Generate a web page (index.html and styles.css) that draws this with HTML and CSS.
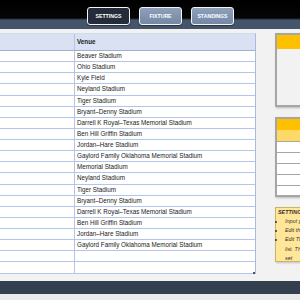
FILE: index.html
```html
<!DOCTYPE html>
<html lang="en">
<head>
  <meta charset="UTF-8">
  <title>Fixture</title>
  <link rel="stylesheet" href="styles.css">
</head>
<body>
  <div class="topbar">
    <div class="nav">
      <button class="nav-btn active">SETTINGS</button>
      <button class="nav-btn">FIXTURE</button>
      <button class="nav-btn">STANDINGS</button>
    </div>
  </div>

  <div class="main">
    <div class="sheet">
      <div class="row head">
        <div class="cell first"></div>
        <div class="cell">Venue</div>
      </div>
      <div class="row"><div class="cell first"></div><div class="cell">Beaver Stadium</div></div>
      <div class="row"><div class="cell first"></div><div class="cell">Ohio Stadium</div></div>
      <div class="row"><div class="cell first"></div><div class="cell">Kyle Field</div></div>
      <div class="row"><div class="cell first"></div><div class="cell">Neyland Stadium</div></div>
      <div class="row"><div class="cell first"></div><div class="cell">Tiger Stadium</div></div>
      <div class="row"><div class="cell first"></div><div class="cell">Bryant–Denny Stadium</div></div>
      <div class="row"><div class="cell first"></div><div class="cell">Darrell K Royal–Texas Memorial Stadium</div></div>
      <div class="row"><div class="cell first"></div><div class="cell">Ben Hill Griffin Stadium</div></div>
      <div class="row"><div class="cell first"></div><div class="cell">Jordan–Hare Stadium</div></div>
      <div class="row"><div class="cell first"></div><div class="cell">Gaylord Family Oklahoma Memorial Stadium</div></div>
      <div class="row"><div class="cell first"></div><div class="cell">Memorial Stadium</div></div>
      <div class="row"><div class="cell first"></div><div class="cell">Neyland Stadium</div></div>
      <div class="row"><div class="cell first"></div><div class="cell">Tiger Stadium</div></div>
      <div class="row"><div class="cell first"></div><div class="cell">Bryant–Denny Stadium</div></div>
      <div class="row"><div class="cell first"></div><div class="cell">Darrell K Royal–Texas Memorial Stadium</div></div>
      <div class="row"><div class="cell first"></div><div class="cell">Ben Hill Griffin Stadium</div></div>
      <div class="row"><div class="cell first"></div><div class="cell">Jordan–Hare Stadium</div></div>
      <div class="row"><div class="cell first"></div><div class="cell">Gaylord Family Oklahoma Memorial Stadium</div></div>
      <div class="row"><div class="cell first"></div><div class="cell"></div></div>
      <div class="row"><div class="cell first"></div><div class="cell"></div></div>
      <span class="grip"></span>
    </div>

    <div class="side">
      <div class="panel panel-top">
        <div class="panel-title"></div>
      </div>

      <div class="panel panel-list">
        <div class="panel-title small"></div>
        <div class="panel-sub"></div>
        <div class="panel-row"></div>
        <div class="panel-row"></div>
        <div class="panel-row"></div>
        <div class="panel-row"></div>
        <div class="panel-row"></div>
      </div>

      <div class="note">
        <div class="note-title">SETTINGS</div>
        <ul>
          <li>Input your team names</li>
          <li>Edit the venue list</li>
          <li>Edit The Team Names in the<br>list. The fixture will be auto<br>set</li>
        </ul>
      </div>
    </div>
  </div>

  <div class="footer"></div>
</body>
</html>
```

FILE: styles.css
```css
body {
  margin: 0;
  width: 300px;
  height: 300px;
  overflow: hidden;
  background: #f2f2f2;
  font-family: "Liberation Sans", Arial, sans-serif;
  color: #222;
}

.topbar {
  height: 29px;
  background: linear-gradient(to bottom, #000 0, #050505 18px, #44546a 20px, #44546a 29px);
}

.nav {
  display: flex;
  gap: 9px;
  padding: 7px 0 0 87px;
}

.nav-btn {
  width: 43px;
  height: 18px;
  padding: 0;
  border: 1.5px solid #f4f4f4;
  border-radius: 3px;
  background: linear-gradient(#8ea0ba, #7487a5);
  color: #fff;
  font-family: "Liberation Sans", Arial, sans-serif;
  font-size: 5.2px;
  font-weight: bold;
  box-shadow: 0 1px 1px rgba(0,0,0,0.4);
}

.nav-btn.active {
  background: #232c38;
}

.main {
  display: flex;
  align-items: flex-start;
  gap: 19px;
  height: 252px;
  padding-top: 4px;
  box-sizing: border-box;
}

.sheet {
  position: relative;
  width: 256px;
  flex-shrink: 0;
  background: #fff;
  border-top: 1px solid #d4dbe8;
  border-right: 1px solid #a9bbdc;
  box-sizing: border-box;
}

.grip {
  position: absolute;
  right: 0;
  bottom: 0;
  width: 2px;
  height: 2px;
  background: #44546a;
}

.row {
  display: grid;
  grid-template-columns: 75px 1fr;
  height: 11.13px;
  border-bottom: 1px solid #b4c6e7;
  box-sizing: border-box;
  font-size: 6.3px;
  line-height: 10px;
  color: #1a1a1a;
}

.row.head {
  height: 17px;
  line-height: 16px;
  background: #d9e1f2;
  border-bottom: 1px solid #9fb0cc;
  font-weight: bold;
}

.cell {
  padding-left: 2px;
  white-space: nowrap;
}

.cell.first {
  border-right: 1px solid #b4c6e7;
}

.side {
  width: 80px;
  flex-shrink: 0;
}

.panel {
  background: #f2f2f2;
  border: 2px solid #a6a6a6;
  box-shadow: 1px 1px 2px rgba(0,0,0,0.25);
}

.panel-top {
  height: 74px;
  box-sizing: border-box;
}

.panel-title {
  height: 14px;
  background: #ffc000;
}

.panel-list {
  margin-top: 10px;
  height: 80px;
  box-sizing: border-box;
  background: #fff;
}

.panel-title.small {
  height: 11px;
}

.panel-sub {
  height: 11px;
  background: #ffd966;
}

.panel-row {
  height: 11px;
  border-top: 1px solid #a6a6a6;
  box-sizing: border-box;
}

.note {
  margin-top: 10px;
  height: 55px;
  box-sizing: border-box;
  background: #ffe699;
  border: 1px solid #c9b46a;
  padding: 1px 0 0 2px;
  font-size: 5.4px;
  font-style: italic;
  color: #333;
  white-space: nowrap;
  box-shadow: 1px 1px 2px rgba(0,0,0,0.2);
}

.note-title {
  font-weight: bold;
  margin-bottom: 2px;
}

.note ul {
  margin: 0;
  padding-left: 7px;
}

.note li {
  line-height: 9.2px;
}

.footer {
  height: 13px;
  background: #333f4f;
  border-bottom: 6px solid #e9e9e9;
}
```
